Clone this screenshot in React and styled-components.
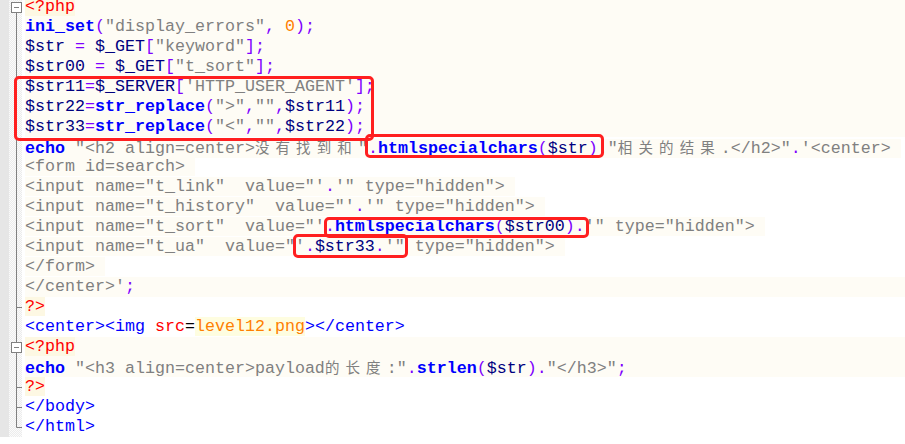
import React from 'react'
import styled, { createGlobalStyle } from 'styled-components'

const GlobalStyle = createGlobalStyle`
  body {
    margin: 0;
    background: #fff;
    overflow: hidden;
  }
`;

const COLORS = {
  kw: '#0000ff',
  op: '#8000ff',
  var: '#000080',
  str: '#808080',
  num: '#ff8000',
  tag: '#ff0000',
  html: '#0000ff',
  attr: '#ff0000',
  val: '#ff8000',
  plain: '#000000',
};

const Editor = styled.div`
  position: relative;
  margin-top: -3px;
  font-family: "Liberation Mono", "Courier New", monospace;
  font-size: 16.67px;
  line-height: 20px;
  white-space: pre;
`;

const Row = styled.div`
  display: flex;
  height: 20px;
`;

const Margin = styled.div`
  width: 9px;
  flex: none;
  background: #e6e6e6;
`;

const Fold = styled.div`
  width: 13px;
  flex: none;
  background: repeating-conic-gradient(#ececec 0 25%, #fbfbfb 0 50%) 0 0 / 2px 2px;
  svg {
    display: block;
  }
`;

const Code = styled.div`
  flex: 1;
  margin-left: 3px;
  background: ${p => (p.$fill === 'full' ? '#fefcf5' : 'transparent')};
`;

const Text = styled.span`
  background: ${p => (p.$fill === 'text' ? '#fefcf5' : 'transparent')};
`;

const Token = styled.span`
  color: ${p => COLORS[p.$type]};
  font-weight: ${p => (p.$type === 'kw' ? 700 : 400)};
  background: ${p =>
    p.$type === 'tag' ? '#fdf8e3' : p.$type === 'val' ? '#fefde0' : 'transparent'};
`;

const Cjk = styled.span`
  font-family: "Noto Sans CJK SC", sans-serif;
  font-size: 14.5px;
  letter-spacing: 6.1px;
`;

const Mark = styled.div`
  position: absolute;
  left: ${p => p.$x}px;
  top: ${p => p.$y + 3}px;
  width: ${p => p.$w}px;
  height: ${p => p.$h}px;
  box-sizing: border-box;
  border: 3px solid #ff1f1f;
  border-radius: 5px;
  pointer-events: none;
`;

const FoldMark = ({ kind }) => (
  <svg width="13" height="20" viewBox="0 0 13 20">
    {kind === 'open' && (
      <g stroke="#808080" fill="none">
        <line x1="7.5" y1="15.5" x2="7.5" y2="20" />
        <rect x="2.5" y="5.5" width="10" height="10" fill="#fff" />
        <line x1="5" y1="10.5" x2="10" y2="10.5" />
      </g>
    )}
    {kind === 'mid' && (
      <g stroke="#808080" fill="none">
        <line x1="7.5" y1="0" x2="7.5" y2="20" />
        <rect x="2.5" y="5.5" width="10" height="10" fill="#fff" />
        <line x1="5" y1="10.5" x2="10" y2="10.5" />
      </g>
    )}
    {kind === 'line' && <line x1="7.5" y1="0" x2="7.5" y2="20" stroke="#808080" />}
    {kind === 'tick' && (
      <g stroke="#808080">
        <line x1="7.5" y1="0" x2="7.5" y2="20" />
        <line x1="7.5" y1="10.5" x2="13" y2="10.5" />
      </g>
    )}
    {kind === 'end' && (
      <g stroke="#808080" fill="none">
        <polyline points="7.5,0 7.5,10.5 13,10.5" />
      </g>
    )}
  </svg>
);

const s = ' ';

const LINES = [
  { fold: 'open', fill: 'full', t: [['tag', '<?php']] },
  { fold: 'line', fill: 'full', t: [['kw', 'ini_set'], ['op', '('], ['str', '"display_errors"'], ['op', ','], ['plain', s], ['num', '0'], ['op', ');']] },
  { fold: 'line', fill: 'full', t: [['var', '$str'], ['plain', s], ['op', '='], ['plain', s], ['var', '$_GET'], ['op', '['], ['str', '"keyword"'], ['op', '];']] },
  { fold: 'line', fill: 'full', t: [['var', '$str00'], ['plain', s], ['op', '='], ['plain', s], ['var', '$_GET'], ['op', '['], ['str', '"t_sort"'], ['op', '];']] },
  { fold: 'line', fill: 'full', t: [['var', '$str11'], ['op', '='], ['var', '$_SERVER'], ['op', '['], ['str', "'HTTP_USER_AGENT'"], ['op', '];']] },
  { fold: 'line', fill: 'full', t: [['var', '$str22'], ['op', '='], ['kw', 'str_replace'], ['op', '('], ['str', '">"'], ['op', ','], ['str', '""'], ['op', ','], ['var', '$str11'], ['op', ');']] },
  { fold: 'line', fill: 'full', t: [['var', '$str33'], ['op', '='], ['kw', 'str_replace'], ['op', '('], ['str', '"<"'], ['op', ','], ['str', '""'], ['op', ','], ['var', '$str22'], ['op', ');']] },
  { fold: 'line', fill: 'text', t: [['kw', 'echo'], ['plain', s], ['str', '"<h2 align=center>'], ['str', '没有找到和', true], ['str', '"'], ['op', '.'], ['kw', 'htmlspecialchars'], ['op', '('], ['var', '$str'], ['op', ')'], ['op', '.'], ['str', '"'], ['str', '相关的结果', true], ['str', '.</h2>"'], ['op', '.'], ['str', "'<center> "]] },
  { fold: 'line', fill: 'text', t: [['str', '<form id=search> ']] },
  { fold: 'line', fill: 'text', t: [['str', `<input name="t_link"  value="'`], ['op', '.'], ['str', `'" type="hidden"> `]] },
  { fold: 'line', fill: 'text', t: [['str', `<input name="t_history"  value="'`], ['op', '.'], ['str', `'" type="hidden"> `]] },
  { fold: 'line', fill: 'text', t: [['str', `<input name="t_sort"  value="'`], ['op', '.'], ['kw', 'htmlspecialchars'], ['op', '('], ['var', '$str00'], ['op', ').'], ['str', `'" type="hidden"> `]] },
  { fold: 'line', fill: 'text', t: [['str', `<input name="t_ua"  value="'`], ['op', '.'], ['var', '$str33'], ['op', '.'], ['str', `'" type="hidden"> `]] },
  { fold: 'line', fill: 'text', t: [['str', '</form> ']] },
  { fold: 'line', fill: 'full', t: [['str', "</center>'"], ['op', ';']] },
  { fold: 'tick', fill: 'none', t: [['tag', '?>']] },
  { fold: 'line', fill: 'none', t: [['html', '<center><img '], ['attr', 'src'], ['plain', '='], ['val', 'level12.png'], ['html', '></center>']] },
  { fold: 'mid', fill: 'full', t: [['tag', '<?php']] },
  { fold: 'line', fill: 'full', t: [['kw', 'echo'], ['plain', s], ['str', '"<h3 align=center>payload'], ['str', '的长度', true], ['str', ':"'], ['op', '.'], ['kw', 'strlen'], ['op', '('], ['var', '$str'], ['op', ')'], ['op', '.'], ['str', '"</h3>"'], ['op', ';']] },
  { fold: 'tick', fill: 'none', t: [['tag', '?>']] },
  { fold: 'tick', fill: 'none', t: [['html', '</body>']] },
  { fold: 'end', fill: 'none', t: [['html', '</html>']] },
];

// red annotation boxes drawn over the code
const MARKS = [
  { x: 14, y: 76, w: 360, h: 65 },
  { x: 365, y: 134, w: 239, h: 24 },
  { x: 324, y: 217, w: 265, h: 21 },
  { x: 293, y: 234, w: 115, h: 24 },
];

export default function App() {
  return (
    <Editor>
      <GlobalStyle />
      {LINES.map((line, i) => (
        <Row key={i}>
          <Margin />
          <Fold>
            <FoldMark kind={line.fold} />
          </Fold>
          <Code $fill={line.fill}>
            <Text $fill={line.fill}>
              {line.t.map(([type, text, cjk], j) => (
                <Token key={j} $type={type}>
                  {cjk ? <Cjk>{text}</Cjk> : text}
                </Token>
              ))}
            </Text>
          </Code>
        </Row>
      ))}
      {MARKS.map((m, i) => (
        <Mark key={i} $x={m.x} $y={m.y} $w={m.w} $h={m.h} />
      ))}
    </Editor>
  )
}
